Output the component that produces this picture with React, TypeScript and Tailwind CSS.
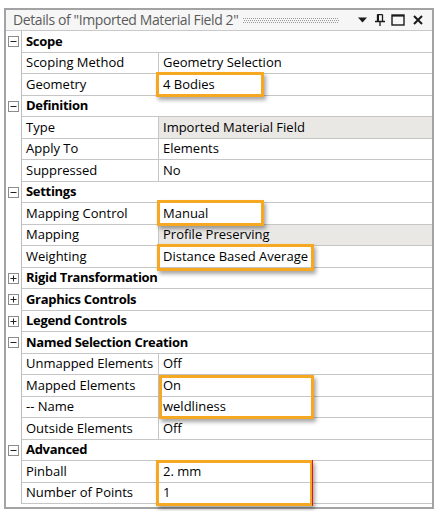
import React from 'react';

type Row =
    | { kind: 'cat'; label: string; open: boolean }
    | { kind: 'prop'; name: string; value: string; readOnly?: boolean };

const rows: Row[] = [
    { kind: 'cat', label: 'Scope', open: true },
    { kind: 'prop', name: 'Scoping Method', value: 'Geometry Selection' },
    { kind: 'prop', name: 'Geometry', value: '4 Bodies' },
    { kind: 'cat', label: 'Definition', open: true },
    { kind: 'prop', name: 'Type', value: 'Imported Material Field', readOnly: true },
    { kind: 'prop', name: 'Apply To', value: 'Elements' },
    { kind: 'prop', name: 'Suppressed', value: 'No' },
    { kind: 'cat', label: 'Settings', open: true },
    { kind: 'prop', name: 'Mapping Control', value: 'Manual' },
    { kind: 'prop', name: 'Mapping', value: 'Profile Preserving', readOnly: true },
    { kind: 'prop', name: 'Weighting', value: 'Distance Based Average' },
    { kind: 'cat', label: 'Rigid Transformation', open: false },
    { kind: 'cat', label: 'Graphics Controls', open: false },
    { kind: 'cat', label: 'Legend Controls', open: false },
    { kind: 'cat', label: 'Named Selection Creation', open: true },
    { kind: 'prop', name: 'Unmapped Elements', value: 'Off' },
    { kind: 'prop', name: 'Mapped Elements', value: 'On' },
    { kind: 'prop', name: '-- Name', value: 'weldliness' },
    { kind: 'prop', name: 'Outside Elements', value: 'Off' },
    { kind: 'cat', label: 'Advanced', open: true },
    { kind: 'prop', name: 'Pinball', value: '2. mm' },
    { kind: 'prop', name: 'Number of Points', value: '1' },
];

// orange call-out boxes drawn over the grid (page coordinates)
const callouts = [
    'left-[156px] top-[72px] w-[108px] h-[25px]',
    'left-[157px] top-[200px] w-[107px] h-[26px]',
    'left-[157px] top-[244px] w-[157px] h-[27px]',
    'left-[159px] top-[375px] w-[155px] h-[44px]',
    'left-[156px] top-[460px] w-[157px] h-[46px]',
];

function ExpandBox({ open }: { open: boolean }) {
    return (
        <svg width="11" height="11" viewBox="0 0 11 11" className="block">
            <rect x="0.5" y="0.5" width="10" height="10" fill="#fff" stroke="#8c8c8c" />
            <line x1="2.5" y1="5.5" x2="8.5" y2="5.5" stroke="#222" />
            {!open && <line x1="5.5" y1="2.5" x2="5.5" y2="8.5" stroke="#222" />}
        </svg>
    );
}

// dotted drag handle in the title bar
function Gripper() {
    const dots = [];
    for (let x = 0; x < 96; x += 2) {
        for (let y = 0; y < 5; y += 2) {
            dots.push(<rect key={`${x}-${y}`} x={x + (y === 2 ? 1 : 0)} y={y} width="1" height="1" fill="#9a9a9a" />);
        }
    }
    return (
        <svg width="96" height="5" viewBox="0 0 96 5" className="block shrink-0">
            {dots}
        </svg>
    );
}

function TitleButtons() {
    return (
        <div className="flex items-center ml-auto pr-[9px] shrink-0">
            <svg width="9" height="6" viewBox="0 0 9 6" className="block">
                <path d="M0 0.5 H9 L4.5 5.5 Z" fill="#1a1a1a" />
            </svg>
            <svg width="10" height="12" viewBox="0 0 10 12" className="block ml-[8px]">
                <path d="M2.5 0.5 H7.5 M2.5 0.5 V7.5 M7.5 0.5 V7.5 M0 7.5 H10 M5 7.5 V12" stroke="#1a1a1a" strokeWidth="1.3" fill="none" />
                <rect x="2" y="0.5" width="2" height="7" fill="#1a1a1a" />
            </svg>
            <svg width="14" height="12" viewBox="0 0 14 12" className="block ml-[6px]">
                <rect x="1" y="1" width="12" height="10" fill="none" stroke="#1a1a1a" strokeWidth="1.4" />
                <line x1="1" y1="1.8" x2="13" y2="1.8" stroke="#1a1a1a" strokeWidth="1.6" />
            </svg>
            <svg width="10" height="10" viewBox="0 0 10 10" className="block ml-[8px]">
                <path d="M1 1 L9 9 M9 1 L1 9" stroke="#1a1a1a" strokeWidth="2" />
            </svg>
        </div>
    );
}

export default function App() {
    return (
        <div className="relative w-[446px] h-[511px] bg-white pt-[8px] pl-[4px] font-['Open_Sans',sans-serif] text-black overflow-hidden">
            <div className="w-[430px] border-2 border-[#a3a3a3] bg-white pb-[3px]">
                <div className="h-[21px] flex items-center pl-[7px] bg-[#f6f6f6] border-b border-[#c9c9c9] overflow-hidden">
                    <span className="text-[14px] text-[#5b5b5b] tracking-[-0.4px] whitespace-nowrap leading-none shrink-0">
                        Details of "Imported Material Field 2"
                    </span>
                    <div className="ml-[5px] shrink-0">
                        <Gripper />
                    </div>
                    <TitleButtons />
                </div>
                <div className="flex flex-col">
                    {rows.map((r, i) => (
                        <div key={i} className="flex h-[21.5px]">
                            <div className="w-[16px] shrink-0 flex items-center justify-center border-r border-[#bdbdbd]">
                                {r.kind === 'cat' && <ExpandBox open={r.open} />}
                            </div>
                            {r.kind === 'cat' ? (
                                <div className="flex-1 flex items-center pl-[4px] border-b border-[#c6c6c6] text-[13px] font-bold tracking-[-0.3px] whitespace-nowrap">
                                    {r.label}
                                </div>
                            ) : (
                                <div className="flex-1 flex border-b border-[#c6c6c6] text-[13px] whitespace-nowrap">
                                    <div className="w-[137px] shrink-0 flex items-center pl-[4px] border-r border-[#c6c6c6]">
                                        {r.name}
                                    </div>
                                    <div className={`flex-1 flex items-center pl-[4px] ${r.readOnly ? 'bg-[#e9e8e5]' : ''}`}>
                                        {r.value}
                                    </div>
                                </div>
                            )}
                        </div>
                    ))}
                </div>
            </div>
            {callouts.map((c, i) => (
                <div
                    key={i}
                    className={`absolute ${c} border-[3px] border-[#f6a823] shadow-[2px_3px_4px_rgba(0,0,0,0.35)]`}
                />
            ))}
            <div className="absolute left-[312px] top-[460px] w-px h-[46px] bg-[#e0141e]" />
        </div>
    );
}
